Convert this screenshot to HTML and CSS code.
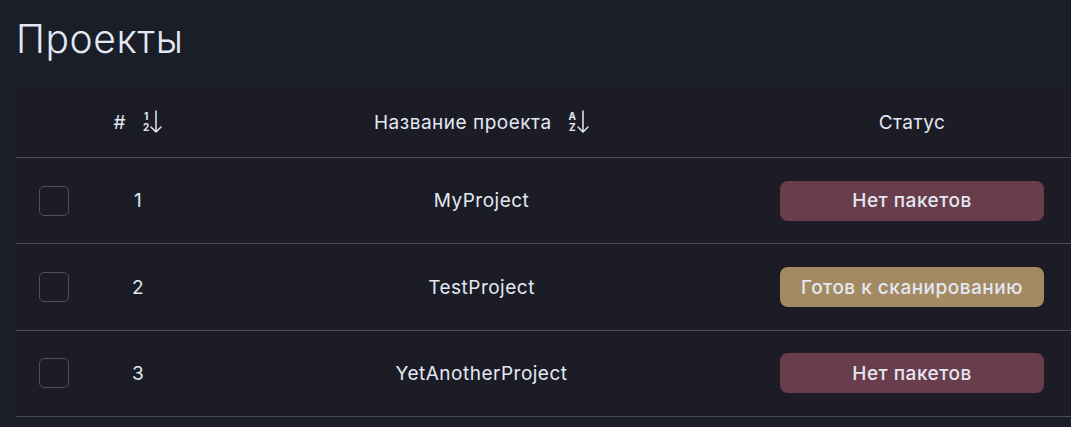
FILE: index.html
```html
<!DOCTYPE html>
<html lang="ru">
<head>
<meta charset="utf-8">
<title>Проекты</title>
<link rel="stylesheet" href="styles.css">
</head>
<body>
<main class="page">
  <h1 class="title">Проекты</h1>
  <div class="table">
    <div class="row head">
      <div class="cell"></div>
      <div class="cell center">
        <span>#</span>
        <span class="sort">
          <span class="sort-stack"><span>1</span><span>2</span></span>
          <svg class="arrow" width="12" height="26" viewBox="0 0 12 26"><path d="M6 2 V23 M1 18 L6 23 L11 18" fill="none" stroke="currentColor" stroke-width="1.5" stroke-linecap="round" stroke-linejoin="round"/></svg>
        </span>
      </div>
      <div class="cell center">
        <span>Название проекта</span>
        <span class="sort">
          <span class="sort-stack"><span>A</span><span>Z</span></span>
          <svg class="arrow" width="12" height="26" viewBox="0 0 12 26"><path d="M6 2 V23 M1 18 L6 23 L11 18" fill="none" stroke="currentColor" stroke-width="1.5" stroke-linecap="round" stroke-linejoin="round"/></svg>
        </span>
      </div>
      <div class="cell center">Статус</div>
      <div class="cell"></div>
    </div>
    <div class="row">
      <div class="cell"><span class="check"></span></div>
      <div class="cell center">1</div>
      <div class="cell center">MyProject</div>
      <div class="cell center"><span class="badge red">Нет пакетов</span></div>
      <div class="cell"></div>
    </div>
    <div class="row">
      <div class="cell"><span class="check"></span></div>
      <div class="cell center">2</div>
      <div class="cell center">TestProject</div>
      <div class="cell center"><span class="badge gold">Готов к сканированию</span></div>
      <div class="cell"></div>
    </div>
    <div class="row">
      <div class="cell"><span class="check"></span></div>
      <div class="cell center">3</div>
      <div class="cell center">YetAnotherProject</div>
      <div class="cell center"><span class="badge red">Нет пакетов</span></div>
      <div class="cell"></div>
    </div>
  </div>
</main>
</body>
</html>
```
FILE: styles.css
```css
html, body {
  margin: 0;
  padding: 0;
  background: #1a1e28;
  color: #e3e8f2;
  font-family: Inter, "Noto Sans", sans-serif;
  overflow: hidden;
}
.page {
  padding: 15px 0 0 16px;
}
.title {
  margin: 0;
  font-size: 39px;
  font-weight: 300;
  line-height: 48px;
  height: 72px;
  color: #e3e8f2;
  letter-spacing: 0.6px;
}
.table {
  background: #1c1c26;
}
.row {
  box-sizing: border-box;
  display: grid;
  grid-template-columns: 76px 92px 595px 266px 1fr;
  height: 86.4px;
  border-bottom: 1px solid #4d4b57;
  font-size: 19px;
  letter-spacing: 0.5px;
}
.row.head {
  height: 71px;
}
.cell {
  display: flex;
  align-items: center;
}
.cell.center {
  justify-content: center;
}
.check {
  display: block;
  width: 28px;
  height: 28px;
  margin-left: 23px;
  border: 1px solid #4f4e5a;
  border-radius: 5px;
}
.sort {
  display: inline-flex;
  align-items: center;
  margin-left: 17px;
  gap: 1px;
  letter-spacing: 0;
}
.sort-stack {
  display: flex;
  flex-direction: column;
  font-size: 10px;
  font-weight: 700;
  line-height: 11px;
  align-items: center;
}
.arrow {
  display: block;
  color: #e3e8f2;
}
.badge {
  display: flex;
  align-items: center;
  justify-content: center;
  width: 264px;
  height: 40px;
  border-radius: 8px;
  font-size: 19px;
  font-weight: 500;
  color: #e3e8f2;
}
.badge.red {
  background: #6a3d4c;
}
.badge.gold {
  background: #a48a63;
}
```
